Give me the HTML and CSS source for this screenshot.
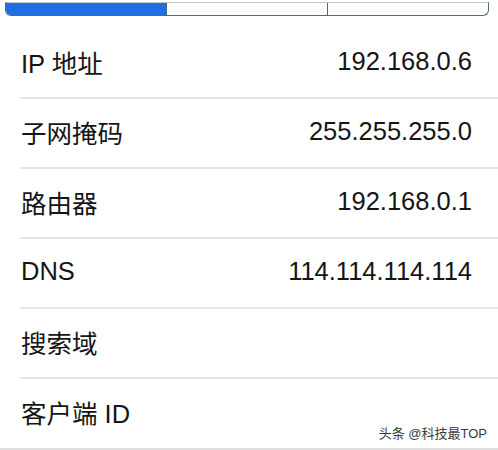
FILE: index.html
```html
<!DOCTYPE html>
<html lang="zh-CN">
<head>
  <meta charset="UTF-8" />
  <meta name="viewport" content="width=device-width, initial-scale=1.0"/>
  <title>IP 设置</title>
  <link rel="stylesheet" href="styles.css">
</head>
<body>

  <div class="tabs">
    <div class="tab active"></div>
    <div class="tab"></div>
    <div class="tab"></div>
  </div>

  <ul class="list">
    <li class="row"><span class="label">IP 地址</span><span class="value">192.168.0.6</span></li>
    <li class="row"><span class="label">子网掩码</span><span class="value">255.255.255.0</span></li>
    <li class="row"><span class="label">路由器</span><span class="value">192.168.0.1</span></li>
    <li class="row"><span class="label">DNS</span><span class="value">114.114.114.114</span></li>
    <li class="row"><span class="label">搜索域</span><span class="value"></span></li>
    <li class="row"><span class="label">客户端 ID</span><span class="value"></span></li>
  </ul>

  <div class="watermark">头条 @科技最TOP</div>

</body>
</html>
```

FILE: styles.css
```css
body {
  margin: 0;
  background: #fff;
  font-family: "Liberation Sans", "Noto Sans CJK SC", sans-serif;
  color: #151515;
  position: relative;
  height: 450px;
  overflow: hidden;
}

.tabs {
  display: flex;
  margin: 2px 9px 0 5px;
  height: 12px;
  border: 1px solid #4d6a76;
  border-top-color: #c4c4c4;
  border-radius: 0 0 6px 6px;
  overflow: hidden;
}

.tab {
  flex: 1;
}

.tab + .tab {
  border-left: 1px solid #4d6a76;
}

.tab.active {
  background: #1f6fe3;
}

.list {
  list-style: none;
  margin: 13px 0 0;
  padding: 0;
  border-bottom: 2px solid #dedede;
}

.row {
  display: flex;
  align-items: center;
  justify-content: space-between;
  box-sizing: border-box;
  height: 70px;
  margin-left: 20px;
  padding: 0 26px 4px 1px;
  border-bottom: 2px solid #e6e6e6;
  font-size: 25.5px;
}

.row:last-child {
  border-bottom: none;
  height: 69px;
}

.watermark {
  position: absolute;
  right: 11px;
  top: 423px;
  font-size: 13px;
  color: #3a3a3a;
}
```
